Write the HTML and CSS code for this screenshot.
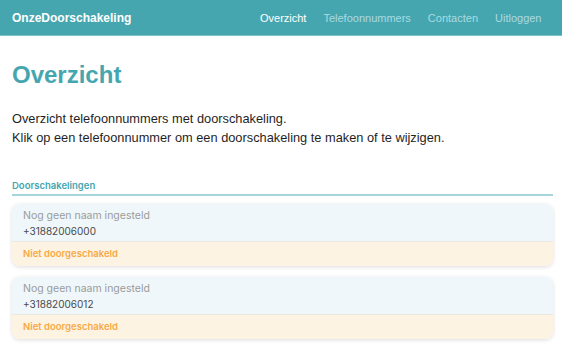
FILE: index.html
```html
<!DOCTYPE html>
<html lang="nl">
  <head>
    <meta charset="UTF-8" />
    <meta name="viewport" content="width=device-width, initial-scale=1.0" />
    <title>Overzicht - OnzeDoorschakeling</title>
    <link rel="stylesheet" href="styles.css">
  </head>
  <body>
    <header id="navbar">
      <a href="javascript:;" class="brand">OnzeDoorschakeling</a>
      <nav id="navbar-links">
        <a href="javascript:;" class="active">Overzicht</a>
        <a href="javascript:;">Telefoonnummers</a>
        <a href="javascript:;">Contacten</a>
        <a href="javascript:;">Uitloggen</a>
      </nav>
    </header>

    <main id="content">
      <h1>Overzicht</h1>
      <p class="intro">
        Overzicht telefoonnummers met doorschakeling.<br />
        Klik op een telefoonnummer om een doorschakeling te maken of te wijzigen.
      </p>

      <section class="forwards">
        <h2 class="section-title">Doorschakelingen</h2>

        <a href="javascript:;" class="card">
          <div class="card-top">
            <span class="card-name">Nog geen naam ingesteld</span>
            <span class="card-number">+31882006000</span>
          </div>
          <div class="card-status">Niet doorgeschakeld</div>
        </a>

        <a href="javascript:;" class="card">
          <div class="card-top">
            <span class="card-name">Nog geen naam ingesteld</span>
            <span class="card-number">+31882006012</span>
          </div>
          <div class="card-status">Niet doorgeschakeld</div>
        </a>
      </section>
    </main>
  </body>
</html>
```

FILE: styles.css
```css
html,
body,
h1,
h2,
p {
  margin: 0;
  padding: 0;
}

body {
  font-family: "Liberation Sans", Arial, sans-serif;
  color: #1d1d1d;
  background: #fff;
}

a {
  text-decoration: none;
}

#navbar {
  display: flex;
  align-items: center;
  justify-content: space-between;
  height: 35px;
  padding: 0 12px 0 12px;
  background-color: #46a6b0;
  border-bottom: 1px solid #7cc0c8;
}

#navbar .brand {
  color: #fff;
  font-weight: bold;
  font-size: 12px;
}

#navbar-links {
  display: flex;
}

#navbar-links > a {
  padding: 0 8.5px;
  font-size: 11px;
  color: #a9dae0;
}

#navbar-links > a.active {
  color: #fff;
}

#content {
  padding: 25px 9px 0 12px;
}

h1 {
  font-size: 24px;
  font-weight: bold;
  color: #46a6b0;
  line-height: 28px;
}

.intro {
  margin-top: 20px;
  font-size: 12.8px;
  line-height: 19px;
  color: #1f1f1f;
}

.forwards {
  margin-top: 33px;
  font-family: Inter, "Noto Sans", sans-serif;
}

.section-title {
  font-size: 9.5px;
  font-weight: 600;
  color: #46a6b0;
  padding-bottom: 3px;
  border-bottom: 2px solid #a6d6db;
  margin-bottom: 8px;
}

.card {
  display: block;
  margin-bottom: 11px;
  border-radius: 8px;
  overflow: hidden;
  box-shadow: 0 1px 4px rgba(0, 0, 0, 0.14);
}

.card-top {
  display: flex;
  flex-direction: column;
  gap: 3px;
  padding: 5px 11px 4px;
  background-color: #eff7fa;
  border-bottom: 1px solid #ece8e0;
}

.card-name {
  font-size: 10.5px;
  color: #9b9b9b;
}

.card-number {
  font-size: 10px;
  color: #4a4a4a;
}

.card-status {
  padding: 6px 11px 7px;
  font-size: 9.5px;
  font-weight: 600;
  color: #f6aa47;
  background-color: #fdf3e2;
}
```
